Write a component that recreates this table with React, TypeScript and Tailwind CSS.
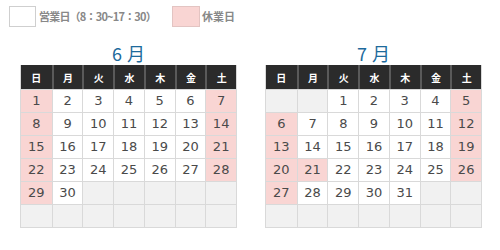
const WEEK = ['日', '月', '火', '水', '木', '金', '土'];

type Cell = { day?: number; off?: boolean };

function buildMonth(startDow: number, days: number, offDays: number[]): Cell[] {
  const cells: Cell[] = [];
  for (let i = 0; i < startDow; i++) cells.push({});
  for (let d = 1; d <= days; d++) cells.push({ day: d, off: offDays.includes(d) });
  while (cells.length < 42) cells.push({});
  return cells;
}

const june = buildMonth(0, 30, [1, 7, 8, 14, 15, 21, 22, 28, 29]);
const july = buildMonth(2, 31, [5, 6, 12, 13, 19, 20, 21, 26, 27]);

function Calendar({ title, cells }: { title: string; cells: Cell[] }) {
  return (
    <div className="w-[217px] flex flex-col">
      <div className="h-[24px] flex items-center justify-center gap-[5px] text-[18px] leading-none text-[#1d6a9c] font-['Noto_Sans_CJK_JP',sans-serif]">
        <span>{title}</span>
        <span>月</span>
      </div>
      <div className="border-x border-b border-[#d9d9d9]">
        <div className="grid grid-cols-7 bg-[#2b2b2b] h-[24px]">
          {WEEK.map((w, i) => (
            <div
              key={w}
              className={`flex items-center justify-center text-white text-[10px] font-bold font-['Noto_Sans_CJK_JP',sans-serif] ${i > 0 ? 'border-l-2 border-[#5a5a5a]' : ''}`}
            >
              {w}
            </div>
          ))}
        </div>
        <div className="grid grid-cols-7">
          {cells.map((c, i) => (
            <div
              key={i}
              className={`h-[23px] flex items-center justify-center text-[13px] text-[#4a4a4a] font-['DejaVu_Sans',sans-serif] border-t border-[#d9d9d9] ${i % 7 > 0 ? 'border-l' : ''} ${
                c.day === undefined ? 'bg-[#f1f1f1]' : c.off ? 'bg-[#f9d5d3]' : 'bg-white'
              }`}
            >
              {c.day}
            </div>
          ))}
        </div>
      </div>
    </div>
  );
}

export default function App() {
  return (
    <div className="w-[500px] h-[250px] bg-white pt-[6px] font-['Noto_Sans_CJK_JP',sans-serif]">
      {/* legend */}
      <div className="flex items-center pl-[9px] h-[21px]">
        <div className="w-[27px] h-[21px] border border-[#cfcfcf] bg-white" />
        <span className="ml-[3px] w-[116px] whitespace-nowrap text-[11px] tracking-[-0.8px] text-[#888] font-bold">営業日（8：30~17：30）</span>
        <div className="ml-[17px] w-[28px] h-[21px] border border-[#e3c4c2] bg-[#f9d5d3]" />
        <span className="ml-[2px] text-[11px] text-[#888] font-bold">休業日</span>
      </div>

      {/* calendars */}
      <div className="flex gap-[28px] pl-[20px] mt-[14px]">
        <Calendar title="6" cells={june} />
        <Calendar title="7" cells={july} />
      </div>
    </div>
  );
}
